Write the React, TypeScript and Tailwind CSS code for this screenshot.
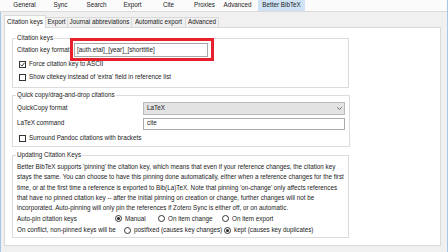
import React from 'react';

const topTabs = ['General', 'Sync', 'Search', 'Export', 'Cite', 'Proxies'];

const subTabs = [
  { label: 'Export', w: 'w-[22px]' },
  { label: 'Journal abbreviations', w: 'w-[64px]' },
  { label: 'Automatic export', w: 'w-[54px]' },
  { label: 'Advanced', w: 'w-[33px]' },
];

const paragraph = [
  "Better BibTeX supports 'pinning' the citation key, which means that even if your reference changes, the citation key",
  'stays the same. You can choose to have this pinning done automatically, either when a reference changes for the first',
  "time, or at the first time a reference is exported to Bib(La)TeX. Note that pinning 'on-change' only affects references",
  'that have no pinned citation key -- after the initial pinning on creation or change, further changes will not be',
  'incorporated. Auto-pinning will only pin the references if Zotero Sync is either off, or on automatic.',
];

const Checkbox = ({ checked }: { checked?: boolean }) => (
  <span className="ml-[2px] mr-[3px] w-[7px] h-[7px] border border-[#333] bg-white flex items-center justify-center shrink-0">
    {checked && (
      <svg width="5" height="5" viewBox="0 0 5 5">
        <polyline points="0.6,2.6 2,4 4.5,0.8" fill="none" stroke="#222" strokeWidth="0.9" />
      </svg>
    )}
  </span>
);

const Radio = ({ checked }: { checked?: boolean }) => (
  <span className="w-[7px] h-[7px] rounded-full border border-[#333] bg-white flex items-center justify-center shrink-0 mr-[3px]">
    {checked && <span className="w-[3px] h-[3px] rounded-full bg-[#222]" />}
  </span>
);

export default function App() {
  return (
    <div
      className="w-[448px] h-[252px] bg-[#f0f0f0] border-r border-[#a6c8e6] overflow-hidden text-[6.3px] text-[#1a1a1a] leading-none"
      style={{ fontFamily: '"Liberation Sans", Arial, sans-serif' }}
    >
      {/* preference pane toolbar */}
      <div className="h-[12px] bg-[#fbfbfb] border-b border-[#dadada] flex items-start pl-[6.5px]">
        {topTabs.map(t => (
          <div key={t} className="w-[36px] h-[11px] flex items-center justify-center">{t}</div>
        ))}
        <div className="w-[30px] h-[11px] flex items-center justify-center">Advanced</div>
        <div className="ml-[5.5px] w-[47px] h-[11px] bg-[#cfe3f5] flex items-center justify-center">Better BibTeX</div>
      </div>

      <div className="border-l border-[#a6c8e6] h-[240px] pt-[3px] pl-[3px]">
        {/* sub tabs */}
        <div className="flex items-end h-[12px]">
          <div className="relative z-10 w-[42px] h-[13px] -mb-px bg-white border border-b-0 border-[#d9d9d9] flex items-center justify-center whitespace-nowrap">
            Citation keys
          </div>
          {subTabs.map(t => (
            <div key={t.label} className={`${t.w} h-[10px] border-t border-r border-[#d9d9d9] flex items-center justify-center whitespace-nowrap`}>
              {t.label}
            </div>
          ))}
        </div>

        {/* panel */}
        <div className="w-[437px] h-[219px] bg-white border border-[#d9d9d9] pt-[6px] pl-[7px]">
          <fieldset className="w-[337px] border border-[#dcdcdc] px-[4px] pt-[1px] pb-[3px]">
            <legend className="-ml-px px-px leading-[8px]">Citation keys</legend>
            <div className="flex items-center h-[14px]">
              <span className="w-[57px] whitespace-nowrap">Citation key format</span>
              <div className="relative w-[134px] h-[14px] border border-[#a8a8a8] bg-white flex items-center pl-[2px]">
                [auth.etal]_[year]_[shorttitle]
                <div className="absolute -left-[5px] -right-[7px] -top-[6px] -bottom-[5px] border-[3px] border-[#e8202c]" />
              </div>
            </div>
            <div className="flex items-center h-[13px] mt-px">
              <Checkbox checked />
              Force citation key to ASCII
            </div>
            <div className="flex items-center h-[13px]">
              <Checkbox />
              Show citekey instead of 'extra' field in reference list
            </div>
          </fieldset>

          <fieldset className="w-[337px] mt-[3px] border border-[#dcdcdc] px-[4px] pt-[2.5px] pb-[1.5px]">
            <legend className="-ml-px px-px leading-[8px]">Quick copy/drag-and-drop citations</legend>
            <div className="flex items-center h-[13px]">
              <span className="w-[126px]">QuickCopy format</span>
              <div className="w-[202px] h-[13px] bg-[#e3e3e3] border border-[#b9b9b9] flex items-center justify-between pl-[3px] pr-[2px]">
                LaTeX
                <svg width="5" height="3" viewBox="0 0 5 3">
                  <polyline points="0.3,0.3 2.5,2.5 4.7,0.3" fill="none" stroke="#555" strokeWidth="0.8" />
                </svg>
              </div>
            </div>
            <div className="flex items-center h-[12px] mt-[3px]">
              <span className="w-[126px]">LaTeX command</span>
              <div className="w-[202px] h-[12px] bg-white border border-[#ababab] flex items-center pl-[3px]">cite</div>
            </div>
            <div className="flex items-center h-[13px] mt-[2px]">
              <Checkbox />
              Surround Pandoc citations with brackets
            </div>
          </fieldset>

          <fieldset className="w-[337px] mt-[4px] border border-[#dcdcdc] px-[4px] pt-[3px] pb-[1.5px]">
            <legend className="-ml-px px-px leading-[8px]">Updating Citation Keys</legend>
            <div className="leading-[10.3px]">
              {paragraph.map(l => (
                <div key={l} className="whitespace-nowrap">{l}</div>
              ))}
            </div>
            <div className="flex items-center h-[11px]">
              <span className="w-[98px]">Auto-pin citation keys</span>
              <span className="w-[43px] flex items-center"><Radio checked />Manual</span>
              <span className="w-[64px] flex items-center"><Radio />On item change</span>
              <span className="flex items-center"><Radio />On item export</span>
            </div>
            <div className="flex items-center h-[11.5px]">
              <span className="w-[107px] whitespace-nowrap">On conflict, non-pinned keys will be</span>
              <span className="w-[100px] flex items-center"><Radio />postfixed (causes key changes)</span>
              <span className="flex items-center"><Radio checked />kept (causes key duplicates)</span>
            </div>
          </fieldset>
        </div>
      </div>
    </div>
  );
}
